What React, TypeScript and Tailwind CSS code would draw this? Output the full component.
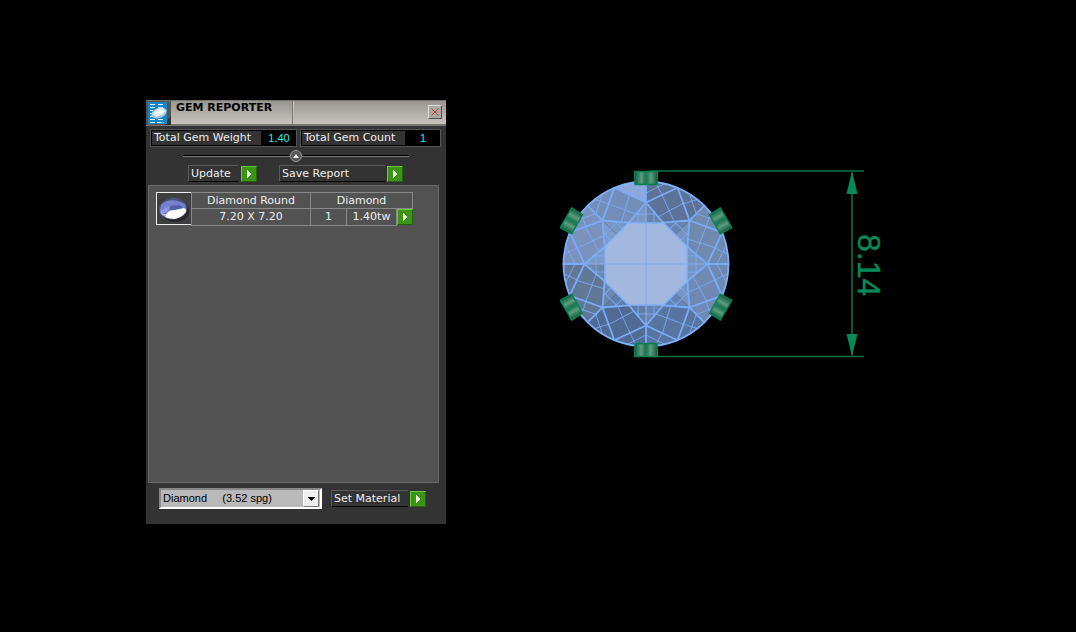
import React, { useState } from 'react';

type ActionProps = {
  id: string;
  label: string;
  className: string;
}

const ArrowButton = ({ id, label }: { id?: string; label?: string }) => (
  <button
    id={id}
    type="button"
    aria-label={label}
    className="flex h-4 w-4 shrink-0 items-center justify-center border border-t-[#66cc3a] border-l-[#66cc3a] border-r-[#246410] border-b-[#246410] bg-[#3c9417] hover:bg-[#46a81c]"
  >
    <svg width="4" height="8" viewBox="0 0 4 8" fill="#e8f4d8" shapeRendering="crispEdges">
      <path d="M0 0h1v1h1v1h1v1h1v2h-1v1h-1v1h-1v1h-1z" />
    </svg>
  </button>
);

const Action = ({ id, label, className }: ActionProps) => (
  <div className="flex items-center">
    <label
      htmlFor={id}
      className={`flex h-[17px] items-center border border-r-0 border-[#5a5a5a] border-b-black pl-0.5 whitespace-nowrap ${className}`}
    >
      {label}
    </label>
    <ArrowButton id={id} />
  </div>
);

const Total = ({ label, value, className }: { label: string; value: string; className: string }) => (
  <div className={`flex h-[18px] border border-[#555] ${className}`}>
    <span className="flex flex-1 items-center border border-black pl-0.5 leading-[14px] whitespace-nowrap">{label}</span>
    <output className="flex w-[34px] items-center justify-center bg-black font-['Liberation_Sans',sans-serif] text-[11px] text-[#22f0f0]">
      {value}
    </output>
  </div>
);

const AppIcon = () => (
  <svg width="25" height="24" viewBox="0 0 25 24" aria-hidden="true">
    <rect width="25" height="24" fill="#55534f" />
    <path d="M25 15v9H18z" fill="#333" />
    <rect x="2" y="1" width="19" height="22" fill="#1287c9" />
    <path
      d="M4 3.500h6M12 3.500h6M4 6.500h5M12 6.500h6M4 9.500h3M16 9.500h2M4 12.500h2M4 15.500h3M4 18.500h6M12 18.500h6M4 21.500h5M11 21.500h7"
      stroke="#e4f4ff"
      strokeDasharray="5 1"
    />
    <ellipse cx="13" cy="12" rx="8" ry="5" transform="rotate(-20 13 12)" fill="#a9c6d8" />
    <path d="M6 13l5-5 6-1 3 3-4 4-6 2z" fill="#dcebf2" />
    <path d="M10 12l4-3 4 1-3 3z" fill="#fff" />
  </svg>
);

const GemThumb = () => (
  <svg width="34" height="31" viewBox="0 0 34 31" aria-label="Round gem">
    <rect width="34" height="31" fill="#3f3f3f" />
    <ellipse cx="18" cy="19" rx="14" ry="10" fill="#292929" />
    <ellipse cx="16" cy="16" rx="14" ry="10.5" fill="#4b538d" transform="rotate(-6 16 16)" />
    <path d="M4 12Q8 6 15 6Q23 5 28 11L29 17L20 19L9 20L3 18Z" fill="#7580cf" />
    <path d="M3 12Q8 5 17 5Q26 5 29 12L26 10Q20 7 14 7Q8 8 3 12Z" fill="#4d5272" />
    <path d="M3 18l10-5-4 7-5 1z" fill="#8e99e4" />
    <path d="M13 13l9-1 6 4-6 1-9 0z" fill="#5360af" />
    <path d="M9 21Q12 17 18 17L27 15Q30 16 29 19Q26 24 18 26Q12 26 8 24Z" fill="#fff" />
    <path d="M4 20l5 1v3l-4-2z" fill="#b3baf0" />
  </svg>
);

const sectorColors = ['#5d7297', '#7089ae', '#7089b2', '#5874a0', '#4f6a93', '#607796', '#7a92bd', '#738eb8'];
const turns = [0, 45, 90, 135, 180, 225, 270, 315];
const prongTurns = [0, 60, 120, 180, 240, 300];

// All facets share one 45 degree wedge, turned around the gem's axis.
const Diamond = () => (
  <g transform="translate(86 99)" strokeLinecap="round" strokeLinejoin="round">
    {turns.map((turn, i) => (
      <g key={turn} transform={`rotate(${turn})`}>
        <path d="M0 0V-82.5A82.5 82.5 0 0 1 58.3-58.3Z" fill={sectorColors[i]} />
      </g>
    ))}
    <path d="M0-61.5L-31.6-76.2A82.5 82.5 0 0 1 0-82.5Z" fill="#8ca8da" />
    {turns.map((turn) => (
      <g key={turn} transform={`rotate(${turn})`} fill="none" stroke="#7aacf8">
        <path d="M-17.500-41L0-61.5 17.500-41Z" fill="#8cabdd" fillOpacity=".3" stroke="none" />
        <path
          d="M-8-41V-52M8-41V-52M-9-50H9M16-69L28-43M38-61L12-47M16-69L10-81M0-71L18-80M-16-69L-10-81M0-71L-18-80"
          strokeWidth="1"
          opacity=".85"
        />
        <path d="M0-61.5V-82.5M0-61.5L31.6-76.2 43.5-43.5M0-61.5L17.500-41M0-61.5L-17.500-41" strokeWidth="1.8" />
      </g>
    ))}
    <path d="M-17.500-41H17.500L41-17.500V17.500L17.500 41H-17.500L-41 17.500V-17.500Z" fill="#a3b8df" stroke="#82b1f8" strokeWidth="1.6" />
    <path d="M0-61V61M-61 0H61" stroke="#82acec" strokeWidth="1.2" />
    <circle r="82.5" fill="none" stroke="#7eb0fb" strokeWidth="1.8" />
    {prongTurns.map((turn) => (
      <g key={turn} transform={`rotate(${turn}) translate(0 -86)`}>
        <path d="M-11.500-6.500H11.500L11 6.500H-11Z" fill="url(#prong)" stroke="#087f4f" strokeWidth="1.4" />
        <path d="M0-6V6" stroke="#0b8b58" strokeWidth="1.2" />
      </g>
    ))}
  </g>
);

const Viewport = () => (
  <svg width="330" height="200" viewBox="0 0 330 200" className="shrink-0" role="img" aria-label="Round diamond, 8.14 across">
    <defs>
      <linearGradient id="prong">
        <stop offset="0" stopColor="#0e5c3c" />
        <stop offset=".3" stopColor="#5c9c80" />
        <stop offset=".5" stopColor="#1b6c4a" />
        <stop offset=".72" stopColor="#5c9c80" />
        <stop offset="1" stopColor="#0e5c3c" />
      </linearGradient>
    </defs>
    <path d="M90 6H304M92 191.500H304M292 8V190" stroke="#047145" strokeWidth="1.6" />
    <path d="M292 6L297.500 29H286.500ZM292 191L297.500 169H286.500Z" fill="#048a58" />
    <Diamond />
    <text
      transform="translate(298 69) rotate(90)"
      fill="#048a58"
      stroke="#048a58"
      strokeWidth=".4"
      className="font-['Liberation_Sans',sans-serif] text-[32px]"
    >
      8.14
    </text>
  </svg>
);

const GemReporter = () => {
  const [material, setMaterial] = useState('diamond');

  return (
    <section className="w-[300px] shrink-0 bg-[#333] pb-[15px]">
      <header className="flex h-[26px] border-t border-b-2 border-t-[#77756f] border-b-[#77756d] bg-linear-to-b from-[#99968f] to-[#c6c4bd]">
        <AppIcon />
        <h1 className="w-[122px] border-r border-[#77756e] pl-[5px] text-[11px] leading-[14px] font-bold text-black">GEM REPORTER</h1>
        <div className="flex flex-1 items-start justify-end border-l border-[#c6c4bd] pt-1 pr-1">
          <button
            type="button"
            aria-label="Close"
            className="flex h-3.5 w-3.5 items-center justify-center border border-t-[#dedcd6] border-l-[#dedcd6] border-r-[#504f4b] border-b-[#504f4b] bg-[#aaa8a1]"
          >
            <svg width="8" height="8" viewBox="0 0 8 8" stroke="#c8323a">
              <path d="M.5.5l7 7M7.500.5l-7 7" />
            </svg>
          </button>
        </div>
      </header>

      <div className="flex gap-[3px] pt-[3px] pr-[5px] pl-1">
        <Total label="Total Gem Weight" value="1.40" className="w-[147px]" />
        <Total label="Total Gem Count" value="1" className="flex-1" />
      </div>

      <div className="mt-[3px] flex h-3 items-center px-[37px]">
        <span className="h-0.5 flex-1 border-t border-b border-t-black border-b-[#777]" />
        <button type="button" aria-label="Collapse" className="flex h-3 w-3 items-center justify-center rounded-full border border-[#999] bg-[#555]">
          <svg width="6" height="4" viewBox="0 0 6 4" fill="#eee">
            <path d="M3 0l3 4H0z" />
          </svg>
        </button>
        <span className="h-0.5 flex-1 border-t border-b border-t-black border-b-[#777]" />
      </div>

      <div className="mt-[3px] flex gap-[22px] pl-[42px]">
        <Action id="update" label="Update" className="mr-[3px] w-[50px]" />
        <Action id="save" label="Save Report" className="mr-0.5 w-[106px]" />
      </div>

      <div className="mt-[3px] mr-[7px] ml-0.5 flex min-h-[298px] items-start border border-t-[#696969] border-l-[#666] border-r-[#696969] border-b-[#696969] bg-[#525252] pt-1.5 pl-[7px]">
        <div className="h-[33px] w-9 border border-[#eee]">
          <GemThumb />
        </div>
        <table className="-ml-px w-[222px] table-fixed border-collapse text-center">
          <colgroup>
            <col className="w-[119px]" />
            <col className="w-9" />
            <col className="w-[50px]" />
            <col className="w-4" />
          </colgroup>
          <tbody>
            <tr className="h-4">
              <td className="border border-[#888] p-0">Diamond Round</td>
              <td colSpan={3} className="border border-[#888] p-0">Diamond</td>
            </tr>
            <tr className="h-4">
              <td className="border border-[#888] p-0">7.20 X 7.20</td>
              <td className="border border-[#888] p-0">1</td>
              <td className="border border-[#888] p-0">1.40tw</td>
              <td className="p-0">
                <ArrowButton label="Select Diamond Round" />
              </td>
            </tr>
          </tbody>
        </table>
      </div>

      <div className="mt-[5px] flex items-center gap-[9px] pl-[13px]">
        <div className="relative">
          <select
            aria-label="Material"
            value={material}
            onChange={(e) => setMaterial(e.target.value)}
            className="block h-[21px] w-[163px] appearance-none rounded-none border-2 border-t-[#888] border-l-[#888] border-r-white border-b-white bg-[#b9b9b9] pl-0.5 font-['Liberation_Sans',sans-serif] text-[11px] text-black"
          >
            <option value="diamond">{'Diamond\u00a0\u00a0\u00a0\u00a0\u00a0(3.52 spg)'}</option>
          </select>
          <span className="pointer-events-none absolute top-0.5 right-[3px] flex h-[17px] w-4 items-center justify-center border border-t-white border-l-white border-r-[#777] border-b-[#777] bg-[#eee]">
            <svg width="7" height="4" viewBox="0 0 7 4" shapeRendering="crispEdges">
              <path d="M0 0h7v1h-1v1h-1v1h-1v1h-1v-1h-1v-1h-1v-1h-1z" />
            </svg>
          </span>
        </div>
        <Action id="set-material" label="Set Material" className="mr-0.5 w-[77px]" />
      </div>
    </section>
  );
};

const App = () => (
  <main className="flex min-h-screen items-start bg-black pt-[100px] pl-[146px] font-['DejaVu_Sans',sans-serif] text-[11px] leading-[15px] text-[#eee]">
    <GemReporter />
    <div className="mt-[65px] ml-[114px]">
      <Viewport />
    </div>
  </main>
);

export default App;
